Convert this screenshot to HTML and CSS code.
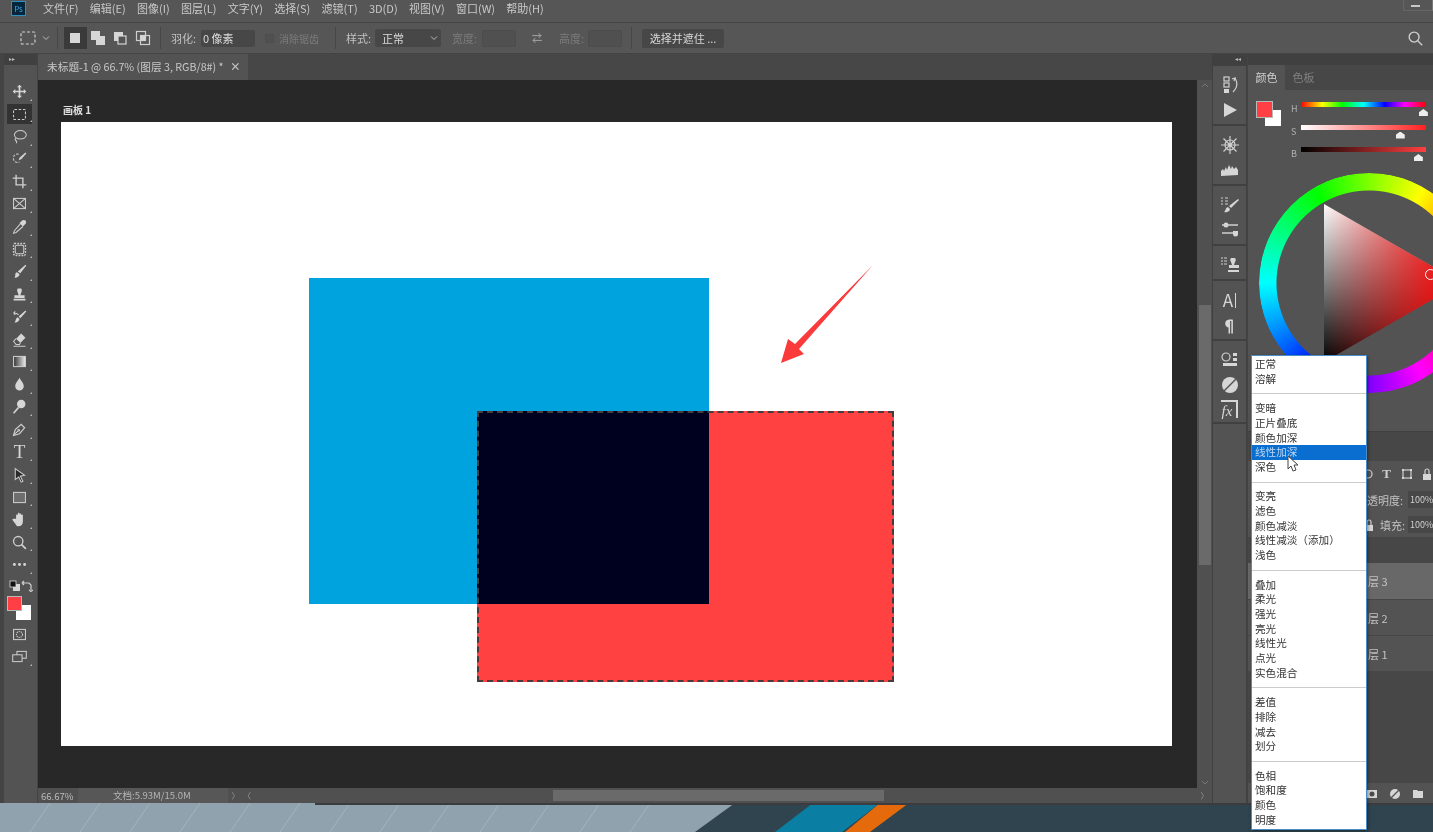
FILE: index.html
```html
<!DOCTYPE html>
<html lang="zh-CN">
<head>
<meta charset="UTF-8">
<title>Photoshop</title>
<link rel="stylesheet" href="styles.css">
</head>
<body>

<div class="app">
    <div class="menubar">
        <div class="ps-logo">Ps</div>
        <span class="menu-item">文件(F)</span>
        <span class="menu-item">编辑(E)</span>
        <span class="menu-item">图像(I)</span>
        <span class="menu-item">图层(L)</span>
        <span class="menu-item">文字(Y)</span>
        <span class="menu-item">选择(S)</span>
        <span class="menu-item">滤镜(T)</span>
        <span class="menu-item">3D(D)</span>
        <span class="menu-item">视图(V)</span>
        <span class="menu-item">窗口(W)</span>
        <span class="menu-item">帮助(H)</span>
        <div class="win-controls"><span class="win-min"></span></div>
    </div>

    <div class="options">
        <div class="preset">
            <svg class="ico" viewBox="0 0 20 20"><rect x="3" y="4" width="14" height="12" rx="1" stroke-dasharray="3 2"/></svg>
            <svg class="chev" viewBox="0 0 8 8"><path d="M1 2.5l3 3 3-3"/></svg>
        </div>
        <div class="sep sep-a"></div>
        <div class="modes">
            <div class="mode mode-on"><svg class="ico" viewBox="0 0 20 20"><rect class="solid" x="5" y="5" width="10" height="10"/></svg></div>
            <div class="mode"><svg class="ico" viewBox="0 0 20 20"><rect class="solid" x="3" y="3" width="9" height="9"/><rect class="solid" x="8" y="8" width="9" height="9"/></svg></div>
            <div class="mode"><svg class="ico" viewBox="0 0 20 20"><rect class="solid" x="4" y="4" width="9" height="9"/><rect class="cut" x="8" y="8" width="8" height="8"/></svg></div>
            <div class="mode"><svg class="ico" viewBox="0 0 20 20"><rect x="3.5" y="3.5" width="9" height="9"/><rect x="7.5" y="7.5" width="9" height="9"/><rect class="solid" x="7.5" y="7.5" width="5" height="5"/></svg></div>
        </div>
        <div class="sep sep-b"></div>
        <span class="opt-label label-feather">羽化:</span>
        <div class="opt-input input-feather">0 像素</div>
        <div class="opt-check"></div>
        <span class="opt-label opt-dim label-aa">消除锯齿</span>
        <div class="sep sep-c"></div>
        <span class="opt-label label-style">样式:</span>
        <div class="opt-select">正常<svg class="chev" viewBox="0 0 8 8"><path d="M1 2.5l3 3 3-3"/></svg></div>
        <span class="opt-label opt-dim label-width">宽度:</span>
        <div class="opt-input input-size"></div>
        <svg class="ico swap-wh" viewBox="0 0 20 20"><path d="M4 7h11M12 4l3 3-3 3M16 13H5M8 10l-3 3 3 3"/></svg>
        <span class="opt-label opt-dim label-height">高度:</span>
        <div class="opt-input input-size input-height"></div>
        <div class="sep sep-d"></div>
        <div class="opt-button">选择并遮住 ...</div>
        <svg class="ico search" viewBox="0 0 20 20"><circle cx="9" cy="9" r="5.5"/><path d="M13 13l5 5"/></svg>
    </div>

    <div class="workspace">
        <div class="toolbar">
            <div class="strip strip-left">&#9656;&#9656;</div>
            <div class="tools">
                <div class="tool"><svg class="ico" viewBox="0 0 20 20"><path class="solid" d="M10 2L7 5h2v4H5V7l-3 3 3 3v-2h4v4H7l3 3 3-3h-2v-4h4v2l3-3-3-3v2h-4V5h2z"/></svg></div>
                <div class="tool tool-on"><svg class="ico" viewBox="0 0 20 20"><rect x="3" y="4" width="14" height="12" rx="1" stroke-dasharray="3 2"/></svg></div>
                <div class="tool"><svg class="ico" viewBox="0 0 20 20"><ellipse cx="11" cy="8" rx="7" ry="5"/><path d="M6 12c-2 1-1 3 0 3s1 1 0 3"/></svg></div>
                <div class="tool"><svg class="ico" viewBox="0 0 20 20"><path d="M9 5C5 4 2 7 3 11c1 3 4 5 7 3" stroke-dasharray="3 1.5"/><path class="solid" d="M17 3l1 1-6 7-3 1 1-3z"/></svg></div>
                <div class="tool"><svg class="ico" viewBox="0 0 20 20"><path stroke-width="1.6" d="M6 2v12h12M2 6h12v12"/></svg></div>
                <div class="tool"><svg class="ico" viewBox="0 0 20 20"><rect x="3" y="4" width="14" height="12"/><path d="M3 4l14 12M17 4L3 16"/></svg></div>
                <div class="tool"><svg class="ico" viewBox="0 0 20 20"><path d="M11 7l-7 8-1 3 3-1 8-7"/><path class="solid" d="M10 6l4 4 2-2 1-1c1-1 1-3 0-4s-3-1-4 0l-1 1z"/></svg></div>
                <div class="tool"><svg class="ico" viewBox="0 0 20 20"><rect x="5" y="5" width="10" height="10" rx="2"/><path stroke-dasharray="2 1.5" stroke-width="1.6" d="M4 3h12l1 2v10l-1 2H4l-1-2V5z"/></svg></div>
                <div class="tool"><svg class="ico" viewBox="0 0 20 20"><path class="solid" d="M17 2l1 1-7 9-3-2zM7 11l3 2c0 3-3 5-6 4 1-1 1-2 1-3 0-2 1-3 2-3z"/></svg></div>
                <div class="tool"><svg class="ico" viewBox="0 0 20 20"><path class="solid" d="M8 3h4c1 1 1 3 0 5l-1 3h5v3H4v-3h5L8 8C7 6 7 4 8 3zM3 15h14v2H3z"/></svg></div>
                <div class="tool"><svg class="ico" viewBox="0 0 20 20"><path class="solid" d="M17 3l1 1-7 8-2-2zM8 11l2 2c0 2-3 5-6 4 2-1 1-5 4-6z"/><path d="M3 6c3 0 5 1 6 2M3 6l2-2M3 6l2 2"/></svg></div>
                <div class="tool"><svg class="ico" viewBox="0 0 20 20"><path class="solid" d="M12 3l5 5-6 6-5-5z"/><path d="M6 9l-3 3 3 4h4l1-2M3 18h14"/></svg></div>
                <div class="tool"><svg class="ico" viewBox="0 0 20 20"><defs><linearGradient id="grad"><stop offset="0" stop-color="#333"/><stop offset="1" stop-color="#eee"/></linearGradient></defs><rect x="3" y="4" width="14" height="12" fill="url(#grad)"/></svg></div>
                <div class="tool"><svg class="ico" viewBox="0 0 20 20"><path class="solid" d="M10 2c2 4 5 6 5 10a5 5 0 0 1-10 0c0-4 3-6 5-10z"/></svg></div>
                <div class="tool"><svg class="ico" viewBox="0 0 20 20"><circle class="solid" cx="12" cy="7" r="5"/><path stroke-width="2" d="M9 11l-6 7"/></svg></div>
                <div class="tool"><svg class="ico" viewBox="0 0 20 20"><path stroke-width="1.4" d="M3 17l2-7 7-6 4 4-6 7z"/><path d="M3 17l5-5"/><circle cx="9" cy="11" r="1"/></svg></div>
                <div class="tool tool-t"><span class="tool-letter">T</span></div>
                <div class="tool"><svg class="ico" viewBox="0 0 20 20"><path class="dark" d="M5 3l11 8-5 1 3 6-2 1-3-6-4 3z"/></svg></div>
                <div class="tool"><svg class="ico" viewBox="0 0 20 20"><rect class="grey" x="3" y="4" width="14" height="12"/></svg></div>
                <div class="tool"><svg class="ico" viewBox="0 0 20 20"><path class="solid" d="M6 9V5a1 1 0 0 1 2 0V3a1 1 0 0 1 2 0v1a1 1 0 0 1 2 0v1a1 1 0 0 1 2 0v7c0 4-2 6-5 6-2 0-3-1-4-3l-3-4c-1-1 0-2 1-2z"/></svg></div>
                <div class="tool"><svg class="ico" viewBox="0 0 20 20"><circle cx="8.5" cy="8.5" r="5.5" stroke-width="1.6"/><path stroke-width="2" d="M12.5 12.5l5 5"/></svg></div>
                <div class="tool"><svg class="ico" viewBox="0 0 20 20"><circle class="solid" cx="4" cy="10" r="1.7"/><circle class="solid" cx="10" cy="10" r="1.7"/><circle class="solid" cx="16" cy="10" r="1.7"/></svg></div>
            </div>
            <div class="mini-colors">
                <svg class="ico-sm" viewBox="0 0 12 12"><rect class="solid" x="4" y="4" width="7" height="7"/><rect class="black" x="1" y="1" width="6" height="6"/></svg>
                <svg class="ico-sm" viewBox="0 0 12 12"><path d="M2 3h6l2 2v5M1 3l2-2M1 3l2 2M8 10l2 1.500 2-1.500"/></svg>
            </div>
            <div class="swatches tool-swatches">
                <div class="swatch-bg"></div>
                <div class="swatch-fg"></div>
            </div>
            <div class="tool tool-plain"><svg class="ico" viewBox="0 0 20 20"><rect x="3" y="4" width="14" height="12"/><circle cx="10" cy="10" r="3.500" stroke-dasharray="1.500 1"/></svg></div>
            <div class="tool"><svg class="ico" viewBox="0 0 20 20"><rect x="7" y="4" width="11" height="8"/><rect class="panel-fill" x="2" y="8" width="11" height="8"/></svg></div>
        </div>

        <div class="document">
            <div class="tabbar">
                <div class="doc-tab">未标题-1 @ 66.7% (图层 3, RGB/8#) * <span class="tab-close">×</span></div>
            </div>
            <div class="doc-body">
                <div class="canvas">
                    <div class="artboard-label">画板 1</div>
                    <div class="artboard">
                        <div class="shape shape-blue"></div>
                        <div class="shape shape-red"></div>
                        <div class="shape shape-overlap"></div>
                        <div class="shape marquee"></div>
                        <svg class="arrow" viewBox="0 0 92 98"><polygon points="92,0 14,79 7,74 0,98 23,89 18,84"/></svg>
                    </div>
                </div>
                <div class="vscroll">
                    <svg class="scroll-arrow" viewBox="0 0 10 10"><path d="M2 6l3-3 3 3"/></svg>
                    <div class="vscroll-track"><div class="vscroll-thumb"></div></div>
                    <svg class="scroll-arrow" viewBox="0 0 10 10"><path d="M2 4l3 3 3-3"/></svg>
                </div>
            </div>
            <div class="statusbar">
                <div class="zoom-value">66.67%</div>
                <div class="doc-info">文档:5.93M/15.0M</div>
                <span class="status-caret">&#x232A;</span>
                <span class="status-caret status-caret-left">&#x2329;</span>
                <div class="hscroll"><div class="hscroll-thumb"></div></div>
                <span class="status-caret">&#x232A;</span>
            </div>
        </div>

        <div class="dock">
            <div class="strip strip-dock">&#9666;&#9666;</div>
            <div class="dock-group">
                <svg class="ico" viewBox="0 0 20 20"><rect x="4" y="2" width="5" height="4"/><rect x="4" y="8" width="5" height="4"/><rect class="solid" x="4" y="14" width="5" height="4"/><path d="M12 4l3-1-1 3M15 3c3 5 2 10-2 14"/></svg>
                <svg class="ico" viewBox="0 0 20 20"><path class="solid" d="M4 3l13 7-13 7z"/></svg>
            </div>
            <div class="dock-group">
                <svg class="ico" viewBox="0 0 20 20"><circle cx="10" cy="10" r="5"/><circle class="solid" cx="10" cy="10" r="1.800"/><path d="M10 1v18M1 10h18M3.500 3.500l13 13M16.500 3.500l-13 13"/></svg>
                <svg class="ico" viewBox="0 0 20 20"><path class="solid" d="M1 16V11l2-2 1 2 2-4 1 3 2-5 2 4 1-3 2 3 2-2 2 3v5z"/></svg>
            </div>
            <div class="dock-group">
                <svg class="ico" viewBox="0 0 20 20"><path class="solid" d="M18 4l1 1-8 8-2-2zM8 12l2 2c0 2-3 4-6 3 2-1 1-4 4-5z"/><path d="M1 3h2M1 6h2M1 9h2M5 3h3M5 6h3M5 9h3"/></svg>
                <svg class="ico" viewBox="0 0 20 20"><circle class="solid" cx="6" cy="5" r="2.500"/><path stroke-width="1.600" d="M2 5h16M2 13h16"/><path class="solid" d="M13 11h5v3a2.500 2.500 0 0 1-5 0z"/></svg>
            </div>
            <div class="dock-group">
                <svg class="ico" viewBox="0 0 20 20"><path class="solid" d="M11 3h4c1 1 1 3 0 4l-1 3h5v3H9v-3h3l-1-3c-1-1-1-3 0-4zM8 15h11v2H8z"/><path d="M1 3h2M1 6h2M1 9h2M4 3h3M4 6h3M4 9h3"/></svg>
            </div>
            <div class="dock-group">
                <div class="dock-text">A<span class="dock-bar"></span></div>
                <div class="dock-text dock-para">¶</div>
            </div>
            <div class="dock-group">
                <svg class="ico" viewBox="0 0 20 20"><circle cx="6" cy="7" r="4"/><rect class="solid" x="13" y="3" width="4" height="3"/><rect class="solid" x="13" y="8" width="4" height="3"/><rect class="solid" x="3" y="13" width="14" height="3"/></svg>
                <svg class="ico" viewBox="0 0 20 20"><circle class="solid" cx="10" cy="10" r="8"/><path class="panel-stroke" stroke-width="1.500" d="M4 16L16 4"/></svg>
                <div class="dock-fx">fx</div>
            </div>
            <div class="dock-group dock-rest"></div>
        </div>

        <div class="panels">
            <div class="strip"></div>
            <div class="panel-tabs">
                <div class="panel-tab panel-tab-on">颜色</div>
                <div class="panel-tab">色板</div>
            </div>
            <div class="color-panel">
                <div class="color-top">
                    <div class="swatches panel-swatches">
                        <div class="swatch-bg"></div>
                        <div class="swatch-fg"></div>
                    </div>
                    <div class="sliders">
                        <div class="slider"><span class="slider-name">H</span><div class="slider-bar bar-h"><i class="thumb" style="left: 97.500%"></i></div></div>
                        <div class="slider"><span class="slider-name">S</span><div class="slider-bar bar-s"><i class="thumb" style="left: 79%"></i></div></div>
                        <div class="slider"><span class="slider-name">B</span><div class="slider-bar bar-b"><i class="thumb" style="left: 93.500%"></i></div></div>
                    </div>
                </div>
                <div class="wheel">
                    <div class="wheel-ring"></div>
                    <div class="wheel-tri"></div>
                    <div class="wheel-marker"></div>
                </div>
            </div>
            <div class="layers-panel">
                <div class="layers-tabs"></div>
                <div class="filter-row">
                    <svg class="ico-sm filter-first" viewBox="0 0 12 12"><circle cx="6" cy="6" r="4"/></svg>
                    <span class="filter-t">T</span>
                    <svg class="ico-sm filter-crop" viewBox="0 0 12 12"><rect x="2" y="2" width="8" height="8"/><rect class="solid" x="1" y="1" width="2" height="2"/><rect class="solid" x="9" y="1" width="2" height="2"/><rect class="solid" x="1" y="9" width="2" height="2"/><rect class="solid" x="9" y="9" width="2" height="2"/></svg>
                    <svg class="ico-sm filter-lock" viewBox="0 0 12 12"><rect class="solid" x="2" y="6" width="8" height="6"/><path d="M4 6V3a2 2 0 0 1 4 0v3"/></svg>
                </div>
                <div class="blend-row"><span class="blend-label">不透明度:</span><span class="blend-value">100%</span></div>
                <div class="blend-row blend-fill"><svg class="ico-sm fill-lock" viewBox="0 0 12 12"><rect class="solid" x="2" y="6" width="8" height="6"/><path d="M4 6V3a2 2 0 0 1 4 0v3"/></svg><span class="blend-label blend-label-fill">填充:</span><span class="blend-value">100%</span></div>
                <div class="layers-gap"></div>
                <div class="layer layer-on">图层 3</div>
                <div class="layer">图层 2</div>
                <div class="layer">图层 1</div>
                <div class="layers-empty"></div>
                <div class="layers-foot">
                    <svg class="ico-sm" viewBox="0 0 12 12"><rect class="solid" x="1" y="2" width="10" height="8"/><circle class="panel-fill-plain" cx="6" cy="6" r="2.500"/></svg>
                    <svg class="ico-sm" viewBox="0 0 12 12"><circle class="solid" cx="6" cy="6" r="5"/><path class="panel-stroke" stroke-width="1.200" d="M2 10L10 2"/></svg>
                    <svg class="ico-sm" viewBox="0 0 12 12"><path class="solid" d="M1 2h4l1 1h5v7H1z"/></svg>
                </div>
            </div>
        </div>
    </div>

    <svg class="wallpaper" viewBox="0 0 1433 29" preserveAspectRatio="none">
        <rect width="1433" height="29" fill="#8fa2ad"/>
        <path class="wall-lines" d="M30 29L50 0M80 29L100 0M130 29L150 0M180 29L200 0M230 29L250 0M280 29L300 0M330 29L350 0M380 29L400 0M430 29L450 0M480 29L500 0M530 29L550 0M580 29L600 0M630 29L650 0"/>
        <polygon points="735,0 1433,0 1433,29 695,29" fill="#2f444f"/>
        <polygon points="813,0 880,0 842,29 775,29" fill="#0b7ea3"/>
        <polygon points="880,0 909,0 870,29 845,29" fill="#e56a0c"/>
        <rect x="315" y="0" width="1118" height="2" fill="#3b3b40"/>
    </svg>

    <div class="blend-menu">
        <div class="blend-item">正常</div>
        <div class="blend-item">溶解</div>
        <div class="blend-sep"></div>
        <div class="blend-item">变暗</div>
        <div class="blend-item">正片叠底</div>
        <div class="blend-item">颜色加深</div>
        <div class="blend-item blend-item-on">线性加深</div>
        <div class="blend-item">深色</div>
        <div class="blend-sep"></div>
        <div class="blend-item">变亮</div>
        <div class="blend-item">滤色</div>
        <div class="blend-item">颜色减淡</div>
        <div class="blend-item">线性减淡（添加）</div>
        <div class="blend-item">浅色</div>
        <div class="blend-sep"></div>
        <div class="blend-item">叠加</div>
        <div class="blend-item">柔光</div>
        <div class="blend-item">强光</div>
        <div class="blend-item">亮光</div>
        <div class="blend-item">线性光</div>
        <div class="blend-item">点光</div>
        <div class="blend-item">实色混合</div>
        <div class="blend-sep"></div>
        <div class="blend-item">差值</div>
        <div class="blend-item">排除</div>
        <div class="blend-item">减去</div>
        <div class="blend-item">划分</div>
        <div class="blend-sep"></div>
        <div class="blend-item">色相</div>
        <div class="blend-item">饱和度</div>
        <div class="blend-item">颜色</div>
        <div class="blend-item">明度</div>
    </div>

    <svg class="cursor" viewBox="0 0 12 18"><path d="M1 1v13l3-3 2 5 3-1-2-5h4z"/></svg>
</div>

</body>
</html>
```

FILE: styles.css
```css
html, body {
    margin: 0;
    padding: 0;
    height: 100%;
    overflow: hidden;
}
body {
    font-family: "Noto Sans CJK SC", "Noto Sans", sans-serif;
    font-size: 11px;
    color: #c8c8c8;
    background-color: #535353;
}
.app {
    position: relative;
    width: 1433px;
    height: 832px;
    overflow: hidden;
    display: flex;
    flex-direction: column;
    filter: blur(0.35px);
}

/* shared icon styles */
.ico, .ico-sm {
    display: block;
    flex: none;
    fill: none;
    stroke: #cfcfcf;
    stroke-width: 1.2;
}
.ico {
    width: 20px;
    height: 20px;
}
.ico-sm {
    width: 12px;
    height: 12px;
}
.solid {
    fill: #d6d6d6;
    stroke: none;
}
.black {
    fill: #111;
    stroke: #ddd;
    stroke-width: 0.8;
}
.cut {
    fill: #535353;
    stroke: #d6d6d6;
}
.dark {
    fill: #2a2a2a;
    stroke: #cfcfcf;
}
.grey {
    fill: #6e6e6e;
}
.panel-fill {
    fill: #535353;
}
.panel-fill-plain {
    fill: #4a4a4a;
    stroke: none;
}
.panel-stroke {
    stroke: #535353;
}
.chev {
    width: 8px;
    height: 8px;
    fill: none;
    stroke: #bbb;
    stroke-width: 1;
}

/* menu bar */
.menubar {
    flex: none;
    height: 23px;
    box-sizing: border-box;
    display: flex;
    align-items: flex-start;
    padding-left: 11px;
    padding-top: 1px;
    background-color: #565656;
    border-bottom: 1px solid #454545;
}
.ps-logo {
    width: 13px;
    height: 13px;
    margin-right: 17px;
    border: 1px solid #2d8fc4;
    background-color: #06263c;
    color: #38a7e6;
    font-size: 8px;
    line-height: 13px;
    text-align: center;
}
.menu-item {
    margin-right: 11.300px;
    line-height: 15px;
    color: #c9c9c9;
}
.win-controls {
    margin-left: auto;
    width: 30px;
    height: 11px;
    margin-top: -1px;
    border-left: 1px solid #666;
    border-bottom: 1px solid #666;
    border-right: 1px solid #777;
    box-sizing: border-box;
}
.win-min {
    display: block;
    width: 9px;
    height: 2px;
    margin: 5px 0 0 7px;
    background-color: #c8c8c8;
}

/* options bar */
.options {
    flex: none;
    height: 31px;
    box-sizing: border-box;
    display: flex;
    align-items: center;
    background-color: #565656;
    border-bottom: 1px solid #444;
}
.preset {
    display: flex;
    align-items: center;
    gap: 4px;
    margin-left: 18px;
    width: 39px;
}
.sep {
    width: 1px;
    height: 22px;
    background-color: #474747;
}
.modes {
    display: flex;
    margin-left: 6px;
}
.mode {
    width: 22.500px;
    height: 22px;
    display: flex;
    align-items: center;
    justify-content: center;
}
.mode-on {
    background-color: #3a3a3a;
}
.sep-b {
    margin-left: 6px;
}
.opt-label {
    flex: none;
    color: #c2c2c2;
}
.opt-dim {
    color: #7b7b7b;
}
.label-feather {
    width: 30px;
    margin-left: 10px;
}
.opt-input {
    flex: none;
    height: 17px;
    line-height: 17px;
    box-sizing: border-box;
    padding-left: 2px;
    background-color: #474747;
    border-radius: 2px;
}
.input-feather {
    width: 54px;
    color: #dcdcdc;
}
.opt-check {
    flex: none;
    width: 7px;
    height: 7px;
    margin-left: 10px;
    border: 1px solid #4d4d4d;
    background-color: #505050;
}
.label-aa {
    width: 40px;
    margin-left: 5px;
    white-space: nowrap;
    font-size: 10px;
}
.sep-c {
    margin-left: 16px;
}
.label-style {
    width: 29px;
    margin-left: 10px;
}
.opt-select {
    flex: none;
    width: 66px;
    height: 18px;
    line-height: 19px;
    box-sizing: border-box;
    padding-left: 7px;
    display: flex;
    align-items: center;
    justify-content: space-between;
    padding-right: 3px;
    background-color: #474747;
    border-radius: 2px;
    color: #dcdcdc;
}
.label-width {
    width: 30px;
    margin-left: 11px;
}
.input-size {
    width: 34px;
    background-color: #505050;
    border: 1px solid #4c4c4c;
}
.swap-wh {
    width: 16px;
    height: 16px;
    margin-left: 13px;
    stroke: #a8a8a8;
}
.label-height {
    width: 29px;
    margin-left: 14px;
}
.sep-d {
    margin-left: 9px;
}
.opt-button {
    flex: none;
    width: 82px;
    height: 19px;
    line-height: 19px;
    margin-left: 10px;
    text-align: center;
    background-color: #474747;
    color: #d8d8d8;
    border-radius: 2px;
}
.search {
    margin-left: auto;
    margin-right: 9px;
    width: 18px;
    height: 18px;
    stroke-width: 1.500;
}

/* main row */
.workspace {
    flex: none;
    height: 749px;
    display: flex;
    background-color: #444;
}
.strip {
    flex: none;
    height: 11px;
    line-height: 10px;
    background-color: #404040;
    color: #b5b5b5;
    font-size: 6px;
}
.strip-left {
    padding-left: 5px;
}
.strip-dock {
    height: 10px;
    text-align: right;
    padding-right: 6px;
}

/* left tools */
.toolbar {
    flex: none;
    width: 33px;
    margin-left: 4px;
    margin-right: 1px;
    display: flex;
    flex-direction: column;
    background-color: #535353;
}
.tools {
    padding-top: 15px;
}
.tool {
    position: relative;
    width: 25px;
    height: 22.550px;
    margin-left: 3px;
    display: flex;
    align-items: center;
    justify-content: center;
}
.tool .ico {
    width: 17px;
    height: 17px;
}
.tool::after {
    content: "";
    position: absolute;
    right: 0;
    bottom: 2px;
    border-left: 2px solid transparent;
    border-bottom: 2px solid #bbb;
}
.tool-plain::after {
    display: none;
}
.tool-on {
    background-color: #333;
    height: 20px;
    margin-top: 1.500px;
    margin-bottom: 1px;
}
.tool-letter {
    font-family: "Liberation Serif", serif;
    font-size: 19px;
    line-height: 20px;
    color: #d6d6d6;
}
.mini-colors {
    height: 20px;
    display: flex;
    align-items: center;
    justify-content: space-between;
    padding: 0 5px;
    margin-top: 0;
}
.swatches {
    position: relative;
}
.swatch-fg, .swatch-bg {
    position: absolute;
    width: 15px;
    height: 15px;
    box-sizing: border-box;
}
.swatch-fg {
    left: 0;
    top: 0;
    background-color: #ff3f43;
    border: 1px solid #b9b9b9;
}
.swatch-bg {
    left: 9px;
    top: 9px;
    background-color: #fff;
}
.tool-swatches {
    height: 27px;
    margin-left: 3px;
}

/* document */
.document {
    flex: none;
    width: 1174px;
    display: flex;
    flex-direction: column;
}
.tabbar {
    flex: none;
    height: 26px;
    display: flex;
    background-color: #474747;
}
.doc-tab {
    width: 210px;
    box-sizing: border-box;
    padding-left: 9px;
    line-height: 26px;
    white-space: nowrap;
    font-size: 10.700px;
    background-color: #535353;
    color: #c8c8c8;
}
.tab-close {
    margin-left: 4px;
    font-weight: bold;
}
.doc-body {
    flex: none;
    height: 708px;
    display: flex;
}
.canvas {
    flex: none;
    width: 1159px;
    box-sizing: border-box;
    padding: 23px 0 0 23px;
    background-color: #282828;
}
.artboard-label {
    height: 19px;
    line-height: 14px;
    margin-left: 2px;
    font-size: 10px;
    font-weight: bold;
    color: #dedede;
}
.artboard {
    position: relative;
    width: 1111px;
    height: 624px;
    background-color: #fff;
}
.shape {
    position: absolute;
}
.shape-blue {
    left: 248px;
    top: 156px;
    width: 400px;
    height: 326px;
    background-color: #00a3dd;
}
.shape-red {
    left: 416px;
    top: 289px;
    width: 417px;
    height: 271px;
    background-color: #ff4142;
}
.shape-overlap {
    left: 416px;
    top: 289px;
    width: 232px;
    height: 193px;
    background-color: #00001f;
}
.marquee {
    left: 416px;
    top: 289px;
    width: 417px;
    height: 271px;
    box-sizing: border-box;
    border: 2px dashed #4a3a3c;
}
.arrow {
    position: absolute;
    left: 720px;
    top: 143px;
    width: 92px;
    height: 98px;
    fill: #fb3a3c;
}
.vscroll {
    flex: none;
    width: 15px;
    display: flex;
    flex-direction: column;
    align-items: center;
    background-color: #505050;
}
.scroll-arrow {
    flex: none;
    width: 10px;
    height: 12px;
    fill: none;
    stroke: #777;
}
.vscroll-track {
    flex: 1;
    width: 12px;
    padding-top: 213px;
}
.vscroll-thumb {
    width: 12px;
    height: 260px;
    background-color: #6a6a6a;
}
.statusbar {
    flex: none;
    height: 15px;
    display: flex;
    align-items: center;
    background-color: #505050;
    font-size: 9.500px;
    color: #bdbdbd;
}
.zoom-value {
    width: 40px;
    padding-left: 3px;
    box-sizing: border-box;
}
.doc-info {
    width: 150px;
    height: 15px;
    line-height: 15px;
    box-sizing: border-box;
    padding-left: 35px;
    background-color: #575757;
    color: #b5b5b5;
}
.status-caret {
    flex: none;
    width: 15px;
    text-align: center;
    font-size: 8px;
    color: #999;
}
.status-caret-left {
    width: 5px;
}
.hscroll {
    flex: 1;
    height: 11px;
    padding-left: 305px;
}
.hscroll-thumb {
    width: 331px;
    height: 11px;
    background-color: #6a6a6a;
}

/* right dock */
.dock {
    flex: none;
    width: 35px;
    margin-right: 1px;
    display: flex;
    flex-direction: column;
    gap: 2px;
    background-color: #404040;
}
.dock-group {
    flex: none;
    margin: 0 1px;
    padding: 9px 0 4px;
    display: flex;
    flex-direction: column;
    align-items: center;
    gap: 5px;
    background-color: #535353;
}
.dock-text {
    height: 20px;
    line-height: 20px;
    font-size: 17px;
    color: #d6d6d6;
    display: flex;
    align-items: center;
}
.dock-bar {
    width: 1px;
    height: 15px;
    margin-left: 2px;
    background-color: #d6d6d6;
}
.dock-para {
    font-weight: bold;
    font-size: 16px;
}
.dock-fx {
    width: 17px;
    height: 18px;
    line-height: 19px;
    box-sizing: border-box;
    padding-right: 3px;
    text-align: center;
    font-family: "Liberation Serif", serif;
    font-style: italic;
    font-size: 15px;
    color: #d6d6d6;
    border-top: 2px solid #d6d6d6;
    border-right: 2px solid #d6d6d6;
}
.dock-rest {
    flex: 1;
}

/* colour panel */
.panels {
    flex: none;
    width: 185px;
    display: flex;
    flex-direction: column;
    overflow: hidden;
}
.panel-tabs {
    flex: none;
    height: 25px;
    display: flex;
    background-color: #474747;
}
.panel-tab {
    width: 37px;
    line-height: 24px;
    text-align: center;
    color: #808080;
}
.panel-tab-on {
    background-color: #535353;
    color: #d0d0d0;
}
.color-panel {
    flex: none;
    height: 341px;
    background-color: #535353;
    overflow: hidden;
}
.color-top {
    height: 83px;
    display: flex;
}
.panel-swatches {
    flex: none;
    width: 33px;
    margin: 11px 0 0 8px;
}
.panel-swatches .swatch-fg {
    width: 17px;
    height: 17px;
}
.panel-swatches .swatch-bg {
    width: 16px;
    height: 16px;
}
.sliders {
    flex: none;
    width: 137px;
    padding-top: 12px;
}
.slider {
    height: 22.500px;
    display: flex;
    color: #b0b0b0;
    font-size: 9px;
}
.slider-name {
    width: 10px;
    margin-left: 2px;
    line-height: 14px;
}
.slider-bar {
    position: relative;
    width: 125px;
    height: 5px;
}
.bar-h {
    background: linear-gradient(to right, #f00, #ff0 17%, #0f0 33%, #0ff 50%, #00f 67%, #f0f 83%, #f00);
}
.bar-s {
    background: linear-gradient(to right, #fff, #ff2020);
}
.bar-b {
    background: linear-gradient(to right, #000, #ff4040);
}
.thumb {
    position: absolute;
    top: 7px;
    width: 9px;
    height: 7px;
    margin-left: -4px;
    background-color: #eee;
    clip-path: polygon(50% 0, 100% 45%, 100% 100%, 0 100%, 0 45%);
}
.wheel {
    position: relative;
    width: 220px;
    height: 220px;
    margin-left: 11px;
}
.wheel-ring {
    width: 100%;
    height: 100%;
    border-radius: 50%;
    background: conic-gradient(from 90deg, #f00, #f0f, #00f, #0ff, #0f0, #ff0, #f00);
    -webkit-mask: radial-gradient(closest-side, transparent 92px, #000 93px);
    mask: radial-gradient(closest-side, transparent 92px, #000 93px);
}
.wheel-tri {
    position: absolute;
    left: 65px;
    top: 31px;
    width: 137px;
    height: 158px;
    clip-path: polygon(0 0, 100% 50%, 0 100%);
    background:
        linear-gradient(to right, rgba(255, 0, 0, 0), #f00),
        linear-gradient(to bottom, #fff, #000);
}
.wheel-marker {
    position: absolute;
    left: 166px;
    top: 96px;
    width: 9px;
    height: 9px;
    border: 1px solid #fff;
    border-radius: 50%;
}

/* layers panel */
.layers-panel {
    flex: none;
    height: 372px;
    display: flex;
    flex-direction: column;
    background-color: #535353;
    border-top: 1px solid #404040;
}
.layers-tabs {
    flex: none;
    height: 29px;
    background-color: #474747;
}
.filter-row {
    flex: none;
    height: 26px;
    display: flex;
    align-items: center;
    padding-left: 114px;
}
.filter-t {
    width: 12px;
    margin-left: 7px;
    font-family: "Liberation Serif", serif;
    font-weight: bold;
    font-size: 13px;
    line-height: 12px;
    text-align: center;
    color: #cfcfcf;
}
.filter-crop {
    margin-left: 9px;
}
.filter-lock {
    margin-left: 8px;
}
.blend-row {
    flex: none;
    height: 25px;
    display: flex;
    align-items: center;
    padding-left: 108px;
    white-space: nowrap;
    color: #c2c2c2;
}
.blend-label {
    width: 52px;
    flex: none;
}
.blend-label-fill {
    width: 28px;
}
.fill-lock {
    margin-left: 7px;
    margin-right: 5px;
}
.blend-value {
    flex: none;
    width: 25px;
    height: 17px;
    line-height: 17px;
    padding-left: 2px;
    box-sizing: border-box;
    background-color: #474747;
    font-size: 9px;
    color: #d0d0d0;
}
.layers-gap {
    flex: none;
    height: 26px;
    background-color: #474747;
}
.layer {
    flex: none;
    height: 36px;
    line-height: 36px;
    padding-left: 109px;
    border-bottom: 1px solid #474747;
    box-sizing: border-box;
    color: #c2c2c2;
}
.layer-on {
    background-color: #686868;
    height: 37px;
}
.layers-empty {
    flex: 1;
    background-color: #474747;
}
.layers-foot {
    flex: none;
    height: 21px;
    display: flex;
    align-items: center;
    gap: 11px;
    padding-left: 118px;
    background-color: #535353;
}

/* desktop behind the window */
.wallpaper {
    flex: none;
    display: block;
    width: 1433px;
    height: 29px;
}
.wall-lines {
    stroke: #a3b4be;
    stroke-width: 1;
    fill: none;
}

/* blend mode dropdown */
.blend-menu {
    position: absolute;
    left: 1251px;
    top: 355px;
    width: 116px;
    height: 475px;
    box-sizing: border-box;
    padding-top: 1px;
    background-color: #fff;
    border: 1px solid #4a8cc6;
    box-shadow: 1px 1px 3px rgba(0, 0, 0, 0.4);
}
.blend-item {
    height: 14.710px;
    line-height: 14.710px;
    padding-left: 3px;
    font-size: 10.600px;
    color: #333;
    white-space: nowrap;
}
.blend-item-on {
    background-color: #0a6ed1;
    color: #bcd6f2;
}
.blend-sep {
    height: 14.710px;
    background: linear-gradient(#ccc, #ccc) no-repeat 0 7px / 100% 1px;
}
.cursor {
    position: absolute;
    left: 1287px;
    top: 455px;
    width: 12px;
    height: 18px;
    fill: #fff;
    stroke: #444;
    stroke-width: 1;
}
```
